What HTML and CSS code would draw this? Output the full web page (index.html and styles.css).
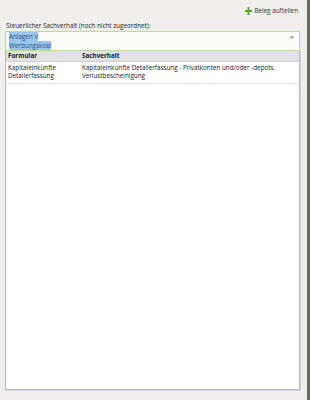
FILE: index.html
```html
<!DOCTYPE html>
<html lang="de">
<head>
<meta charset="UTF-8">
<title>Sachverhalt</title>
<link rel="stylesheet" href="styles.css">
</head>
<body>
<div class="page">
  <div class="main">
    <div class="toolbar">
      <a class="split" href="#">
        <svg width="7" height="8" viewBox="0 0 7 8"><path d="M3.5 0v8M0 4h7" stroke="#5aa63a" stroke-width="2"/></svg>
        Beleg aufteilen
      </a>
    </div>
    <div class="label">Steuerlicher Sachverhalt (noch nicht zugeordnet):</div>
    <div class="field">
      <div class="field-text"><span class="sel">Anlagen V</span><br><span class="sel">Werbungskost</span></div>
      <span class="clear">&times;</span>
    </div>
    <div class="grid">
      <div class="row head">
        <div class="c1">Formular</div>
        <div class="c2">Sachverhalt</div>
      </div>
      <div class="row">
        <div class="c1">Kapitaleinkünfte Detailerfassung</div>
        <div class="c2">Kapitaleinkünfte Detailerfassung - Privatkonten und/oder -depots, Verlustbescheinigung</div>
      </div>
    </div>
  </div>
  <div class="edge"></div>
</div>
</body>
</html>
```

FILE: styles.css
```css
*{
  margin: 0;
  padding: 0;
  box-sizing: border-box;
}

body{
  width: 310px;
  height: 400px;
  background: #f0efeb;
  font-family: "Open Sans", "Noto Sans", sans-serif;
  font-size: 6.3px;
  color: #1e1e1e;
  overflow: hidden;
}

.page{
  display: flex;
  height: 400px;
}

.main{
  flex: 1;
  padding: 0 7px 0 5px;
  display: flex;
  flex-direction: column;
}

.edge{
  width: 3px;
  background: #6b6b6b;
}

.toolbar{
  height: 21px;
  display: flex;
  justify-content: flex-end;
  align-items: center;
  padding-right: 2px;
}

.split{
  display: flex;
  align-items: center;
  gap: 2px;
  color: #333;
  text-decoration: none;
}

.label{
  padding-left: 1px;
  height: 10px;
  line-height: 10px;
}

.field{
  display: flex;
  justify-content: space-between;
  height: 20px;
  background: #fbfbf9;
  border: 1px solid #b9dba0;
  padding: 1px 5px 0 3px;
  line-height: 8.5px;
}

.sel{
  background: #9dc4ec;
  color: #2a4f7a;
}

.clear{
  font-size: 8px;
  color: #666;
  line-height: 8px;
}

.grid{
  flex: 1;
  background: #fff;
  border: 1px solid #b0bccb;
  border-top: none;
  box-shadow: 1px 1px 0 #c9d2dd;
  margin-bottom: 10px;
}

.row{
  display: grid;
  grid-template-columns: 74px 1fr;
  border-bottom: 1px solid #e4e4e4;
  padding: 2px 0 3px;
  line-height: 8px;
  color: #222;
}

.row.head{
  background: #e1e1e1;
  font-weight: bold;
  padding: 1px 0 0;
  height: 11px;
  border-bottom: 1px solid #d0d0d0;
}

.c1{
  padding-left: 2px;
}

.c2{
  padding-left: 2px;
  padding-right: 4px;
}
```
